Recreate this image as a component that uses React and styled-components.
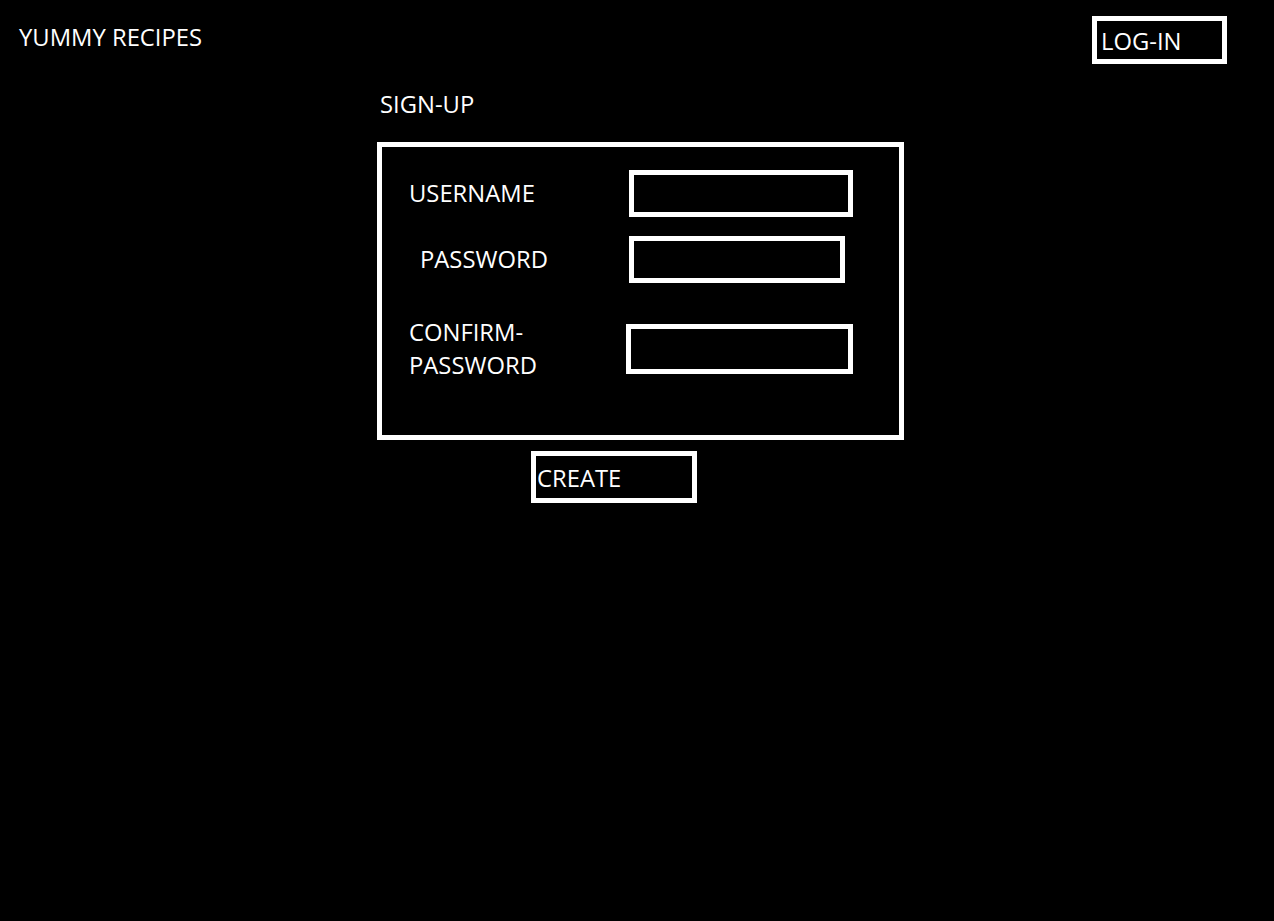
import styled, { createGlobalStyle } from 'styled-components';

const GlobalStyle = createGlobalStyle`
  html, body {
    margin: 0;
    padding: 0;
    background: #000000;
  }
  body {
    font-family: "Open Sans", "Liberation Sans", sans-serif;
    font-size: 23.8px;
    line-height: 33px;
    color: #ffffff;
  }
  #root {
    min-height: 921px;
    background: #000000;
  }
`;

const Header = styled.header`
  display: flex;
  justify-content: space-between;
  align-items: flex-start;
  padding: 16px 47px 0 19px;
`;

const Logo = styled.div`
  margin-top: 5px;
`;

const BoxButton = styled.button`
  box-sizing: border-box;
  width: ${(p) => p.$width}px;
  height: ${(p) => p.$height}px;
  border: 5px solid #ffffff;
  background: #000000;
  color: #ffffff;
  font: inherit;
  text-align: left;
  padding: ${(p) => p.$padTop}px 0 0 ${(p) => p.$padLeft}px;
  align-self: flex-start;
  display: flex;
  align-items: flex-start;
`;

const Section = styled.main`
  margin-left: 377px;
  margin-top: 24px;
`;

const Title = styled.div`
  padding-left: 3px;
  margin-bottom: 21px;
`;

const FormBox = styled.form`
  box-sizing: border-box;
  width: 527px;
  height: 298px;
  border: 5px solid #ffffff;
  padding-left: 27px;
`;

const Row = styled.div`
  display: grid;
  grid-template-columns: 220px auto;
  align-items: center;
  margin-top: ${(p) => p.$top}px;
`;

const Label = styled.label`
  padding-left: ${(p) => p.$indent || 0}px;
`;

const Field = styled.input`
  box-sizing: border-box;
  width: ${(p) => p.$width}px;
  height: ${(p) => p.$height}px;
  margin: 0 0 0 ${(p) => p.$shift || 0}px;
  border: 5px solid #ffffff;
  background: #000000;
  color: #ffffff;
  font: inherit;
  outline: none;
`;

const CreateWrap = styled.div`
  margin-top: 11px;
  margin-left: 154px;
  display: flex;
`;

const rows = [
  { label: 'USERNAME', top: 23, width: 224, height: 47 },
  { label: 'PASSWORD', top: 19, width: 216, height: 47, indent: 11, type: 'password' },
  { label: ['CONFIRM-', 'PASSWORD'], top: 33, width: 227, height: 50, shift: -3, type: 'password' },
];

export default function App() {
  return (
    <>
      <GlobalStyle />
      <Header>
        <Logo>YUMMY RECIPES</Logo>
        <BoxButton $width={135} $height={48} $padTop={4} $padLeft={4}>
          LOG-IN
        </BoxButton>
      </Header>
      <Section>
        <Title>SIGN-UP</Title>
        <FormBox onSubmit={(e) => e.preventDefault()}>
          {rows.map((r, i) => (
            <Row key={i} $top={r.top}>
              <Label $indent={r.indent}>
                {Array.isArray(r.label)
                  ? r.label.map((l) => <div key={l}>{l}</div>)
                  : r.label}
              </Label>
              <Field
                type={r.type || 'text'}
                $width={r.width}
                $height={r.height}
                $shift={r.shift}
              />
            </Row>
          ))}
        </FormBox>
        <CreateWrap>
          <BoxButton $width={166} $height={52} $padTop={6} $padLeft={1}>
            CREATE
          </BoxButton>
        </CreateWrap>
      </Section>
    </>
  );
}
